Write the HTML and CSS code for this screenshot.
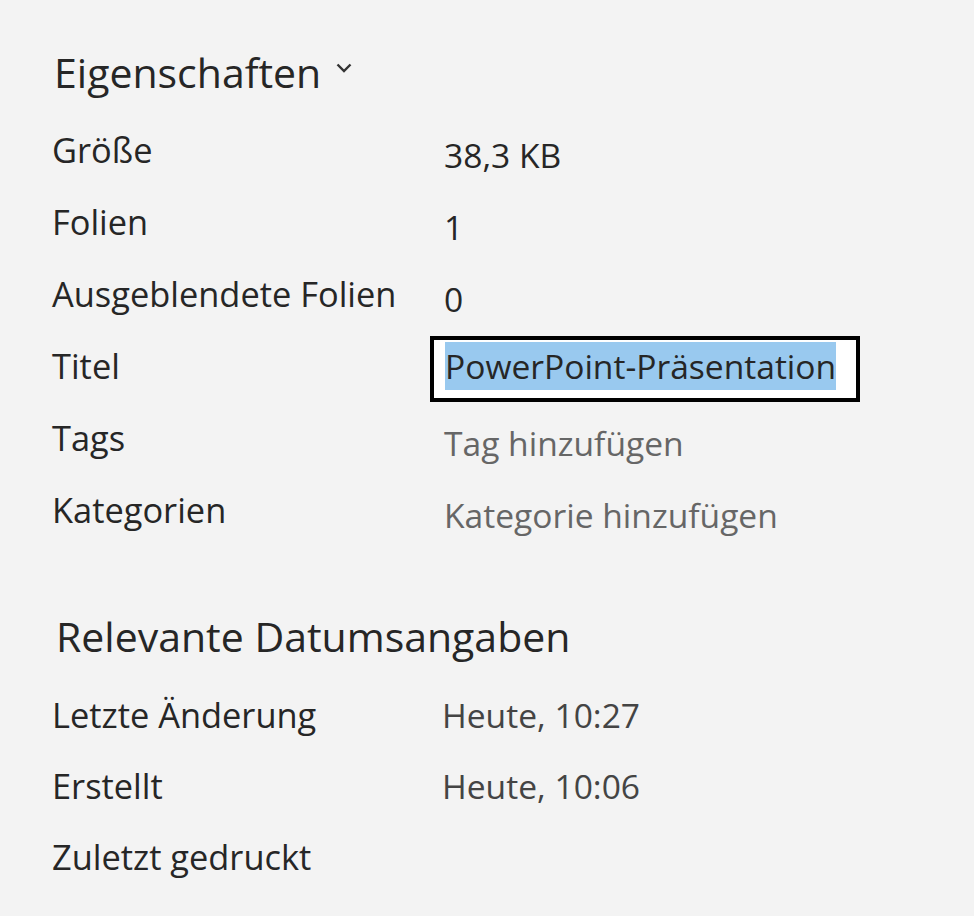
FILE: index.html
```html
<!DOCTYPE html>
<html lang="de">
<head>
    <meta charset="UTF-8">
    <meta name="viewport" content="width=device-width, initial-scale=1.0">
    <title>Eigenschaften</title>
    <link rel="stylesheet" href="styles.css">
</head>
<body>
    <section class="props">
        <h2 class="props-title">Eigenschaften
            <svg class="chevron" width="16" height="10" viewBox="0 0 16 10">
                <path d="M1.5 1.5 L8 8 L14.5 1.5" fill="none" stroke="#333" stroke-width="2.4"/>
            </svg>
        </h2>
        <div class="prop-grid">
            <div class="prop-label">Größe</div>
            <div class="prop-value">38,3 KB</div>

            <div class="prop-label">Folien</div>
            <div class="prop-value">1</div>

            <div class="prop-label">Ausgeblendete Folien</div>
            <div class="prop-value">0</div>

            <div class="prop-label">Titel</div>
            <div class="prop-value title-cell">
                <div class="title-box"><span class="selected">PowerPoint-Präsentation</span></div>
            </div>

            <div class="prop-label">Tags</div>
            <div class="prop-value placeholder">Tag hinzufügen</div>

            <div class="prop-label">Kategorien</div>
            <div class="prop-value placeholder">Kategorie hinzufügen</div>
        </div>
    </section>

    <section class="dates">
        <h2 class="dates-title">Relevante Datumsangaben</h2>
        <div class="prop-grid date-grid">
            <div class="prop-label">Letzte Änderung</div>
            <div class="prop-value date">Heute, 10:27</div>

            <div class="prop-label">Erstellt</div>
            <div class="prop-value date">Heute, 10:06</div>

            <div class="prop-label">Zuletzt gedruckt</div>
            <div class="prop-value date"></div>
        </div>
    </section>
</body>
</html>
```

FILE: styles.css
```css
* {
    margin: 0;
    padding: 0;
    box-sizing: border-box;
    font-family: "Segoe UI", "Open Sans", sans-serif;
}
body {
    background-color: #f3f3f3;
    color: #262626;
    width: 974px;
    height: 916px;
    overflow: hidden;
    padding: 40px 0 0 52px;
}
.props-title {
    font-size: 41px;
    font-weight: 400;
    line-height: 64px;
    margin-left: 2px;
    margin-bottom: 10px;
    display: flex;
    align-items: center;
    gap: 15px;
}
.chevron {
    margin-bottom: 9px;
}
.prop-grid {
    display: grid;
    grid-template-columns: 392px 1fr;
    grid-auto-rows: 72px;
    align-items: center;
}
.date-grid {
    grid-auto-rows: 71px;
}
.prop-label {
    font-size: 34.4px;
    line-height: 44px;
    white-space: nowrap;
}
.prop-value {
    font-size: 33.6px;
    line-height: 44px;
    margin-top: 9px;
    white-space: nowrap;
}
.title-cell {
    margin-top: 5px;
}
.placeholder {
    color: #666666;
}
.title-box {
    display: inline-block;
    border: 4px solid #000;
    background: #fff;
    padding: 2px 20px 8px 11px;
    margin-left: -14px;
}
.selected {
    background: #99c9ef;
    display: inline-block;
    line-height: 48px;
}
.dates {
    margin-top: 62px;
}
.dates-title {
    font-size: 41px;
    font-weight: 400;
    line-height: 56px;
    margin-left: 4px;
    margin-bottom: 15px;
}
.date {
    color: #444444;
    margin-top: 0;
    margin-left: -2px;
}
```
